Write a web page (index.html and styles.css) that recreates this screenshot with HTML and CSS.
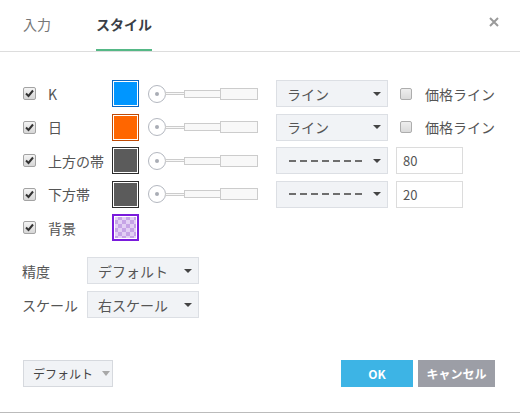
FILE: index.html
```html
<!DOCTYPE html>
<html lang="ja">
<head>
<meta charset="utf-8">
<link rel="stylesheet" href="styles.css">
</head>
<body>
<div class="dialog">
  <div class="header">
    <div class="tab">入力</div>
    <div class="tab active">スタイル</div>
    <div class="close"><svg width="10" height="10" viewBox="0 0 10 10"><path d="M1 1L9 9M9 1L1 9" stroke="#9a9a9a" stroke-width="2"/></svg></div>
  </div>
  <div class="content">
    <div class="rows">
      <div class="row">
        <span class="cb checked"><svg viewBox="0 0 13 13" width="13" height="13"><path d="M3 6.5L5.5 9L10 3.5" fill="none" stroke="#333" stroke-width="2"/></svg></span>
        <span class="label">K</span>
        <span class="swatch blue"></span>
        <span class="slider"><span class="knob"><i></i></span><span class="s1"></span><span class="s2"></span><span class="s3"></span></span>
        <span class="select"><span class="val">ライン</span><span class="arrow"></span></span>
        <span class="extra"><span class="cb"></span><span class="extra-label">価格ライン</span></span>
      </div>
      <div class="row">
        <span class="cb checked"><svg viewBox="0 0 13 13" width="13" height="13"><path d="M3 6.5L5.5 9L10 3.5" fill="none" stroke="#333" stroke-width="2"/></svg></span>
        <span class="label">日</span>
        <span class="swatch orange"></span>
        <span class="slider"><span class="knob"><i></i></span><span class="s1"></span><span class="s2"></span><span class="s3"></span></span>
        <span class="select"><span class="val">ライン</span><span class="arrow"></span></span>
        <span class="extra"><span class="cb"></span><span class="extra-label">価格ライン</span></span>
      </div>
      <div class="row">
        <span class="cb checked"><svg viewBox="0 0 13 13" width="13" height="13"><path d="M3 6.5L5.5 9L10 3.5" fill="none" stroke="#333" stroke-width="2"/></svg></span>
        <span class="label">上方の帯</span>
        <span class="swatch gray"></span>
        <span class="slider"><span class="knob"><i></i></span><span class="s1"></span><span class="s2"></span><span class="s3"></span></span>
        <span class="select"><span class="dash"></span><span class="arrow"></span></span>
        <span class="num">80</span>
      </div>
      <div class="row">
        <span class="cb checked"><svg viewBox="0 0 13 13" width="13" height="13"><path d="M3 6.5L5.5 9L10 3.5" fill="none" stroke="#333" stroke-width="2"/></svg></span>
        <span class="label">下方帯</span>
        <span class="swatch gray"></span>
        <span class="slider"><span class="knob"><i></i></span><span class="s1"></span><span class="s2"></span><span class="s3"></span></span>
        <span class="select"><span class="dash"></span><span class="arrow"></span></span>
        <span class="num">20</span>
      </div>
      <div class="row">
        <span class="cb checked"><svg viewBox="0 0 13 13" width="13" height="13"><path d="M3 6.5L5.5 9L10 3.5" fill="none" stroke="#333" stroke-width="2"/></svg></span>
        <span class="label">背景</span>
        <span class="swatch checker"></span>
      </div>
    </div>
    <div class="opts">
      <div class="opt">
        <span class="opt-label">精度</span>
        <span class="select small"><span class="val">デフォルト</span><span class="arrow"></span></span>
      </div>
      <div class="opt">
        <span class="opt-label">スケール</span>
        <span class="select small"><span class="val">右スケール</span><span class="arrow"></span></span>
      </div>
    </div>
  </div>
  <div class="footer">
    <span class="btn-default">デフォルト<span class="arrow light"></span></span>
    <span class="btn ok">OK</span>
    <span class="btn cancel">キャンセル</span>
  </div>
</div>
</body>
</html>
```

FILE: styles.css
```css
* { box-sizing: border-box; }
html, body { margin: 0; padding: 0; background: #fff; }
body {
  font-family: "Noto Sans CJK JP", "Liberation Sans", sans-serif;
  font-size: 14px;
  color: #555;
}
.dialog {
  width: 520px;
  height: 413px;
  border-bottom: 1px solid #bbb;
  display: flex;
  flex-direction: column;
}
.header {
  height: 52px;
  border-bottom: 1px solid #ddd;
  display: flex;
  align-items: flex-start;
  padding-left: 23px;
  padding-right: 21px;
}
.tab {
  height: 51px;
  padding-top: 14px;
  line-height: 20px;
  font-size: 14px;
  color: #777;
  margin-right: 45px;
  border-bottom: 2px solid transparent;
}
.tab.active {
  color: #3a3e46;
  font-weight: bold;
  border-bottom-color: #55b886;
}
.close {
  margin-left: auto;
  padding-top: 17px;
}
.close svg { display: block; }

.content { padding-top: 28px; }
.rows { display: flex; flex-direction: column; gap: 6.5px; padding-left: 23px; }
.row {
  display: grid;
  grid-template-columns: 25px 64px 36px 128px 120px auto;
  align-items: center;
  height: 27px;
}
.cb {
  width: 13px;
  height: 13px;
  border: 1px solid #a3a3a3;
  border-radius: 2px;
  background: linear-gradient(#f4f4f4, #d6d6d6);
  display: inline-block;
  position: relative;
}
.cb svg { position: absolute; left: -1px; top: -1px; }
.label { line-height: 20px; color: #555; }
.swatch {
  width: 27px;
  height: 27px;
  border: 1px solid;
  box-shadow: inset 0 0 0 1px #fff;
}
.swatch.blue { background: #0096ff; border-color: #0a67c2; }
.swatch.orange { background: #ff6600; border-color: #c04a05; }
.swatch.gray { background: #5b5b5b; border-color: #2c2c2c; }
.swatch.checker {
  border: 2px solid #7a1bdc;
  box-shadow: inset 0 0 0 1px #fff;
  background-color: #e2cff4;
  background-image:
    linear-gradient(45deg, #c6a4e6 25%, transparent 25%, transparent 75%, #c6a4e6 75%),
    linear-gradient(45deg, #c6a4e6 25%, transparent 25%, transparent 75%, #c6a4e6 75%);
  background-size: 8px 8px;
  background-position: 0 0, 4px 4px;
}
.slider { display: flex; align-items: center; width: 110px; }
.knob {
  width: 18px;
  height: 18px;
  border: 1px solid #b3b7bf;
  border-radius: 50%;
  background: #fff;
  display: flex;
  align-items: center;
  justify-content: center;
  flex: none;
}
.knob i { width: 4px; height: 4px; border-radius: 50%; background: #a9adb5; display: block; }
.s1, .s2, .s3 { border: 1px solid #ccc; background: #f8f8f8; flex: none; margin-left: -1px; }
.s1 { width: 20px; height: 3px; }
.s2 { width: 37px; height: 8px; }
.s3 { width: 38px; height: 12px; }
.select {
  width: 112px;
  height: 27px;
  border: 1px solid #dcdfe4;
  background: #f1f3f6;
  display: flex;
  align-items: center;
  padding: 0 6px 0 10px;
  color: #555;
}
.select .val { flex: 1; line-height: 20px; }
.dash {
  flex: none;
  width: 74px;
  height: 2px;
  margin-left: 2px;
  margin-right: auto;
  background-image: repeating-linear-gradient(90deg, #6e6e6e 0px, #6e6e6e 7.5px, rgba(0,0,0,0) 7.5px, rgba(0,0,0,0) 11px);
}
.arrow {
  width: 0;
  height: 0;
  border-left: 4px solid transparent;
  border-right: 4px solid transparent;
  border-top: 4px solid #444;
  flex: none;
}
.arrow.light { border-top-color: #a8a8a8; border-left-width: 4px; border-right-width: 4px; border-top-width: 5px; margin-left: 9px; }
.extra { display: flex; align-items: center; padding-left: 4px; }
.extra .cb { width: 12px; height: 12px; border-color: #adadad; background: linear-gradient(#eee, #dadada); }
.extra-label { margin-left: 13px; line-height: 20px; color: #555; }
.num {
  width: 67px;
  height: 27px;
  border: 1px solid #dcdcdc;
  background: #fff;
  font-size: 13px;
  line-height: 25px;
  padding-left: 6px;
  color: #555;
}
.opts { margin-top: 16px; padding-left: 22px; display: flex; flex-direction: column; gap: 7px; }
.opt { display: flex; align-items: center; height: 27px; }
.opt-label { width: 65px; line-height: 20px; color: #555; }
.select.small { width: 112px; }

.footer {
  margin-top: auto;
  display: flex;
  align-items: center;
  padding: 0 25px 25px 23px;
}
.btn-default {
  width: 90px;
  height: 27px;
  border: 1px solid #d6d9de;
  background: #f1f3f6;
  display: flex;
  align-items: center;
  padding-left: 9px;
  font-size: 12px;
  color: #444;
}
.btn {
  height: 27px;
  display: flex;
  align-items: center;
  justify-content: center;
  color: #fff;
  font-weight: bold;
  font-size: 12px;
}
.btn.ok { width: 72px; background: #3db4e5; margin-left: auto; }
.btn.cancel { width: 77px; background: #9c9ea6; margin-left: 5px; }
```
